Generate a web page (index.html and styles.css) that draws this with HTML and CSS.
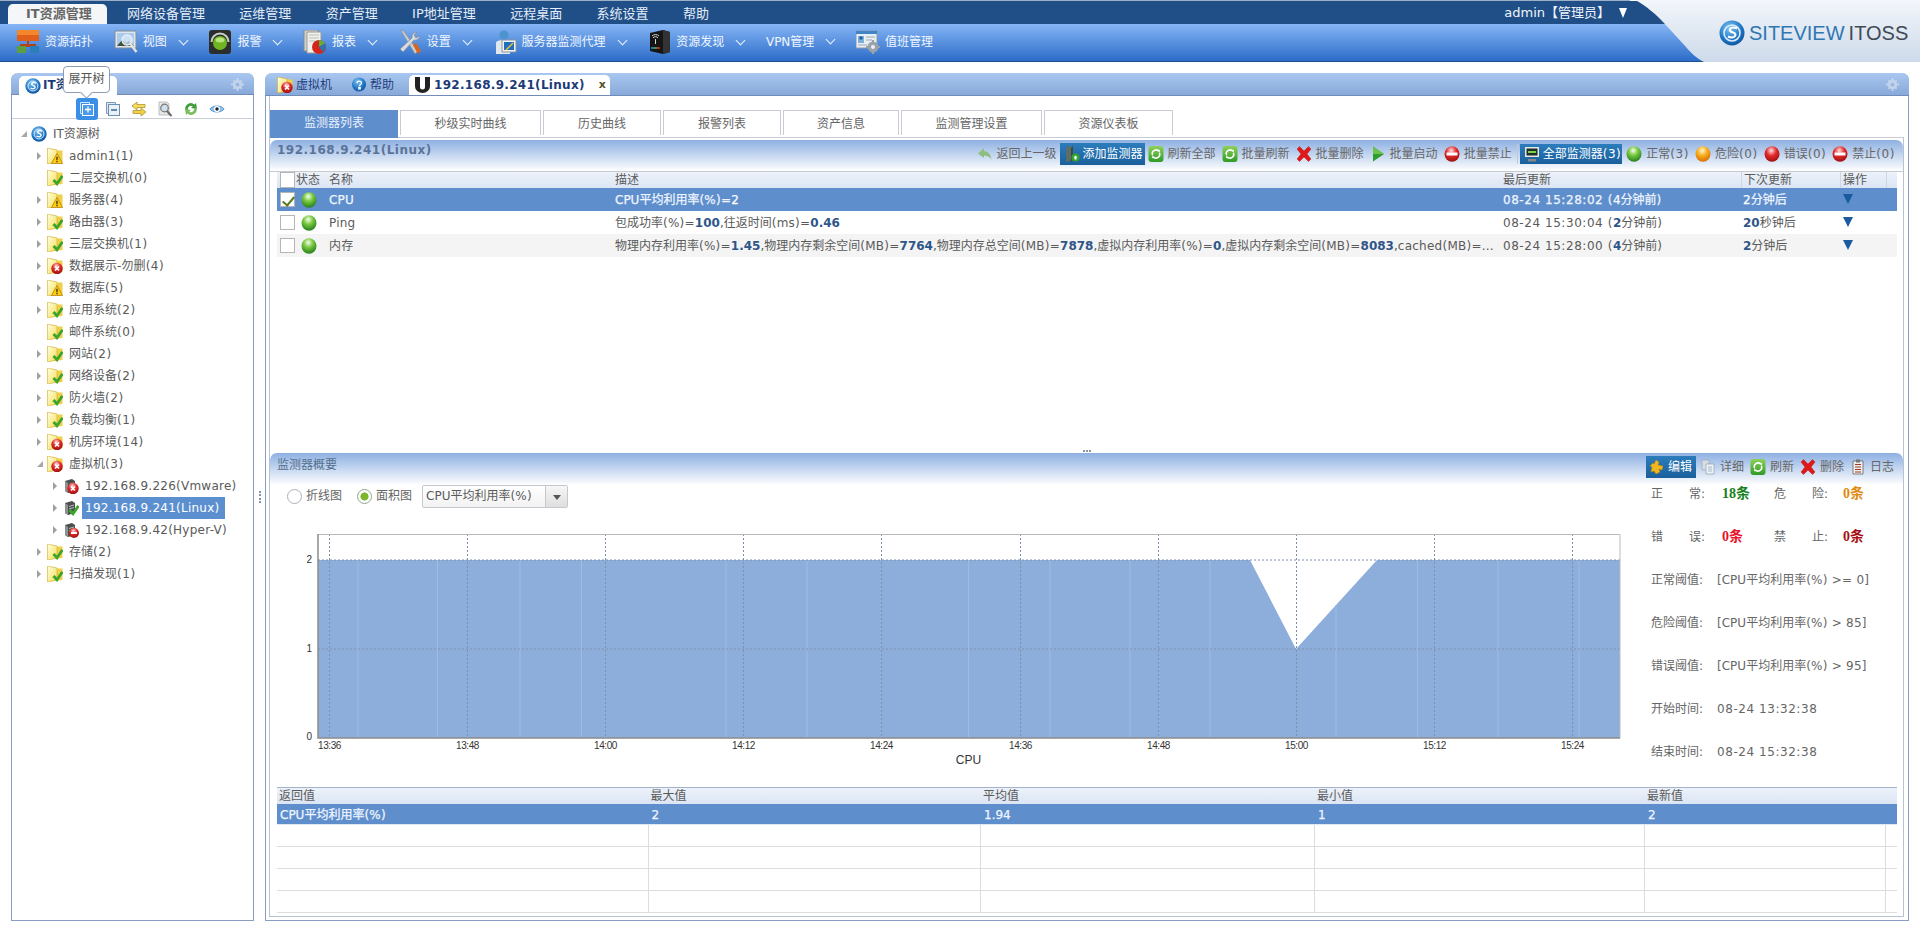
FILE: index.html
```html
<!DOCTYPE html>
<html lang="zh-CN">
<head>
<meta charset="utf-8">
<title>IT资源管理</title>
<link rel="stylesheet" href="styles.css">
</head>
<body>
<svg class="defs" xmlns="http://www.w3.org/2000/svg">
<defs>
<radialGradient id="gG" cx=".45" cy=".28" r=".75"><stop offset="0" stop-color="#f4ffe8"/><stop offset=".42" stop-color="#78c83f"/><stop offset="1" stop-color="#1f7a1a"/></radialGradient>
<radialGradient id="gO" cx=".45" cy=".28" r=".75"><stop offset="0" stop-color="#fff6cc"/><stop offset=".45" stop-color="#f7ad1e"/><stop offset="1" stop-color="#d56a00"/></radialGradient>
<radialGradient id="gR" cx=".45" cy=".28" r=".75"><stop offset="0" stop-color="#ffdede"/><stop offset=".45" stop-color="#e22b2b"/><stop offset="1" stop-color="#990d0d"/></radialGradient>
<linearGradient id="gF" x1="0" y1="0" x2="1" y2="1"><stop offset="0" stop-color="#fffee4"/><stop offset="1" stop-color="#f6de52"/></linearGradient>
<linearGradient id="gRf" x1="0" y1="0" x2="0" y2="1"><stop offset="0" stop-color="#8ed25a"/><stop offset="1" stop-color="#2f9a26"/></linearGradient>
<linearGradient id="gTb" x1="0" y1="0" x2="0" y2="1"><stop offset="0" stop-color="#85b5f5"/><stop offset="1" stop-color="#2c6cc8"/></linearGradient>
<linearGradient id="gLogo" x1="0" y1="0" x2="0" y2="1"><stop offset="0" stop-color="#f3f6fb"/><stop offset="1" stop-color="#cddaea"/></linearGradient>
<radialGradient id="gS" cx=".4" cy=".3" r=".8"><stop offset="0" stop-color="#7fc4f2"/><stop offset=".6" stop-color="#1f74c4"/><stop offset="1" stop-color="#0d4d94"/></radialGradient>
<g id="folder"><path d="M.5 1h7l1.500 1.500h6.500V14L2 15.500z" fill="#efd048"/><path d="M.5 0 10 2v12L.5 16z" fill="url(#gF)" stroke="#d0ae30" stroke-width=".6"/></g>
<g id="ovOk"><path d="M6.500 10l3.500 3.800 5.500-8" fill="none" stroke="#3da52b" stroke-width="2.800"/></g>
<g id="ovWarn"><path d="M10 5.500l5.700 10H4.300z" fill="#ffca10" stroke="#a87a00" stroke-width=".7"/><path d="M9.400 8.800h1.200v3.500H9.400zM9.400 13h1.200v1.200H9.400z" fill="#222"/></g>
<g id="ovErr"><circle cx="10" cy="10.500" r="5.700" fill="url(#gR)"/><path d="M8 8.500l4 4m0-4l-4 4" stroke="#fff" stroke-width="1.700"/></g>
<g id="ovStop"><circle cx="11" cy="11" r="5" fill="url(#gR)"/><path d="M8 10h6v2H8z" fill="#fff"/></g>
<g id="srv"><path d="M2 3l7-2 3 2v10l-7 2-3-2z" fill="#4b4f4f"/><path d="M2 3l3 2v10l-3-2z" fill="#8d9291"/><path d="M6 6.500l5-1.500M6 9l5-1.500" stroke="#b9bcbb"/></g>
<symbol id="f-ok" viewBox="0 0 16 16"><use href="#folder"/><use href="#ovOk"/></symbol>
<symbol id="f-warn" viewBox="0 0 16 16"><use href="#folder"/><use href="#ovWarn"/></symbol>
<symbol id="f-err" viewBox="0 0 16 16"><use href="#folder"/><use href="#ovErr"/></symbol>
<symbol id="s-ok" viewBox="0 0 16 16"><use href="#srv"/><use href="#ovOk"/></symbol>
<symbol id="s-err" viewBox="0 0 16 16"><use href="#srv"/><use href="#ovErr"/></symbol>
<symbol id="s-stop" viewBox="0 0 16 16"><use href="#srv"/><use href="#ovStop"/></symbol>
<symbol id="ball-g" viewBox="0 0 16 16"><ellipse cx="8" cy="8" rx="7.500" ry="7.800" fill="url(#gG)"/></symbol>
<symbol id="ball-o" viewBox="0 0 16 16"><ellipse cx="8" cy="8" rx="7.500" ry="7.800" fill="url(#gO)"/></symbol>
<symbol id="ball-r" viewBox="0 0 16 16"><ellipse cx="8" cy="8" rx="7.500" ry="7.800" fill="url(#gR)"/></symbol>
<symbol id="stop" viewBox="0 0 16 16"><ellipse cx="8" cy="8" rx="7.500" ry="7.800" fill="url(#gR)"/><path d="M2.500 6.500h11v3h-11z" fill="#fff"/></symbol>
<symbol id="refresh" viewBox="0 0 16 16"><rect x="0.500" y="0" width="15" height="16" rx="3" fill="url(#gRf)"/><path d="M4.500 9a3.700 3.700 0 0 1 6-4M11.500 7a3.700 3.700 0 0 1-6 4" fill="none" stroke="#fff" stroke-width="1.500"/><path d="M9 3.500l3 .5-.5 3zM7 12.500l-3-.5.500-3z" fill="#fff"/></symbol>
<symbol id="xred" viewBox="0 0 16 16"><path d="M1 3l2.500-2.500L8 5l4.500-4.500L15 3l-4 5 4 5-2.500 2.500L8 11l-4.500 4.500L1 13l4-5z" fill="#e01818" stroke="#a81010" stroke-width=".4"/></symbol>
<symbol id="play" viewBox="0 0 16 16"><path d="M3 0.500L14 8 3 15.500z" fill="#2f9d2b"/><path d="M3 0.500L14 8H3z" fill="#6cc24d"/></symbol>
<symbol id="back" viewBox="0 0 16 16"><path d="M7 2L1 7.500 7 12V9.500c3 0 5.500 1 7.500 4C14 8.500 11 5.500 7 5z" fill="#8fbf80"/></symbol>
<symbol id="add" viewBox="0 0 16 16"><path d="M2 1l7-1v14l-7 2z" fill="#5d6e66"/><path d="M9 0v14l-2 2V2z" fill="#3a4a44"/><circle cx="11.500" cy="11.500" r="4" fill="#2fa52c"/><path d="M11.500 9.500l2 2h-1v2h-2v-2h-1z" fill="#fff"/></symbol>
<symbol id="mon" viewBox="0 0 16 16"><rect x="1" y="1" width="14" height="10" fill="#e8e8e0"/><rect x="2.500" y="2.500" width="11" height="7" fill="#1d2f2a"/><path d="M4 5h8v2H4z" fill="#7ed048"/><path d="M4 13h8v2.500H4z" fill="#888"/></symbol>
<symbol id="edit" viewBox="0 0 16 16"><path d="M7 1l3 2-1 3 5 1-1 4-3-1 1 3-4 2-2-3-3 1 1-5-2-1 3-3 1 1z" fill="#f0b61e" stroke="#b98200" stroke-width=".5"/></symbol>
<symbol id="detail" viewBox="0 0 16 16"><path d="M2 1h7v10H2z" fill="#d6dde4" stroke="#9aa6b2" stroke-width=".7"/><path d="M6 5h8v10H6z" fill="#eef2f6" stroke="#8ea0b4" stroke-width=".7"/><path d="M8 8h4M8 10h4M8 12h4" stroke="#a8b8c8"/></symbol>
<symbol id="log" viewBox="0 0 16 16"><path d="M3 2h10v13H3z" fill="#eee" stroke="#666" stroke-width=".8"/><path d="M5 5.500h6M5 8h6M5 10.500h6M5 13h6" stroke="#a13a20"/><path d="M6 0.500h4v3H6z" fill="#777"/></symbol>
<symbol id="sv" viewBox="0 0 26 26"><circle cx="13" cy="13" r="12.500" fill="url(#gS)"/><circle cx="13" cy="13" r="8" fill="none" stroke="#d7ecff" stroke-width="1.600"/><path d="M18 8.500c-3-1.500-6-1-7 .5s1 3 3 3.500 3 2 2 3.500-4 2-7 .5" fill="none" stroke="#fff" stroke-width="2.200"/></symbol>
<symbol id="uicon" viewBox="0 0 15 16"><path d="M0 0h5v10a2.500 2.500 0 0 0 5 0V0h5v9.500a7.500 6.500 0 0 1-15 0z" fill="#222"/></symbol>
<symbol id="expand" viewBox="0 0 16 16"><path d="M1.500 1.500h9v2h-7v9h-2z" fill="none" stroke="#d6e6f6"/><rect x="3.500" y="3.500" width="11" height="11" fill="#4c9bea" stroke="#fff"/><path d="M9 5.500v6M6 8.500h6" stroke="#fff" stroke-width="1.300"/></symbol>
<symbol id="collapse" viewBox="0 0 16 16"><path d="M1.500 1.500h9v2h-7v9h-2z" fill="#dde7f2" stroke="#7d9abb"/><rect x="3.500" y="3.500" width="11" height="11" fill="#e9f1f8" stroke="#6d8eb3"/><path d="M6 9h6" stroke="#2b5a8c" stroke-width="1.400"/></symbol>
<symbol id="swap" viewBox="0 0 16 16"><path d="M1 5l5-4v2.500h8v3H6V9z" fill="#f6dc5a" stroke="#a68a20" stroke-width=".7"/><path d="M15 11l-5 4v-2.500H2v-3h8V7z" fill="#f3d048" stroke="#a68a20" stroke-width=".7"/></symbol>
<symbol id="find" viewBox="0 0 16 16"><path d="M2 1h8l2 2v11H2z" fill="#e8e8e8" stroke="#a9a9a9" stroke-width=".7"/><circle cx="7.500" cy="7" r="3.800" fill="#cfe0ea" stroke="#777" stroke-width="1.200"/><path d="M10 10l4.500 5" stroke="#666" stroke-width="2"/></symbol>
<symbol id="sync" viewBox="0 0 16 16"><path d="M2.500 9a5.500 5.500 0 0 1 9-5.500L13 2l1 6-6-1 1.800-1.700A3.200 3.200 0 0 0 5 9z" fill="#3f9e3a"/><path d="M13.500 7a5.500 5.500 0 0 1-9 5.500L3 14l-1-6 6 1-1.800 1.700A3.200 3.200 0 0 0 11 7z" fill="#7bbd62"/></symbol>
<symbol id="eye" viewBox="0 0 18 16"><path d="M1 8c3-4.500 13-4.500 16 0-3 4.500-13 4.500-16 0z" fill="#8fc2ea" stroke="#4d8fc7"/><circle cx="9" cy="8" r="3.400" fill="#fff"/><circle cx="9" cy="8" r="1.900" fill="#123"/></symbol>
<symbol id="gear" viewBox="0 0 16 16"><path d="M8 3a5 5 0 1 0 0 10A5 5 0 0 0 8 3zm0 3a2 2 0 1 1 0 4 2 2 0 0 1 0-4z" fill="#c3d3ea"/><path d="M7 1h2v2.500H7zM7 12.500h2V15H7zM1 7h2.500v2H1zM12.500 7H15v2h-2.500zM2.800 4.200l1.400-1.400 1.800 1.800-1.400 1.400zM10 11.400l1.400-1.400 1.800 1.800-1.400 1.400zM2.800 11.800l1.800-1.800 1.400 1.400-1.800 1.800zM10 4.600l1.800-1.800 1.400 1.400-1.800 1.800z" fill="#c3d3ea"/></symbol>
<symbol id="help" viewBox="0 0 16 16"><ellipse cx="8" cy="7.500" rx="7" ry="7" fill="url(#gS)"/><path d="M5 15l3-3h3z" fill="#1f74c4"/><path d="M6 6c0-2.500 4.500-2.500 4.500 0 0 1.500-2 1.500-2 3M7.800 10.500h1.400v1.400H7.800z" fill="none" stroke="#fff" stroke-width="1.300"/></symbol>
<symbol id="t-topo" viewBox="0 0 24 24"><path d="M1 0h22v11H1z" fill="#e0601a"/><path d="M1 0h22v5H1z" fill="#f4862c"/><path d="M11 11h2v3h7v3H4v-3h7z" fill="#b2421a"/><path d="M1 16h9v7H1z" fill="#5c9f3c"/><path d="M14 16h9v7h-9z" fill="#2b7fb8"/></symbol>
<symbol id="t-view" viewBox="0 0 24 24"><path d="M1 1h21v17H1z" fill="#dfe6ee" stroke="#7f8b96"/><path d="M3 3h17v13H3z" fill="#a9cbec"/><path d="M3 16l5-6 4 3 3-2 5 5z" fill="#40503c"/><circle cx="13" cy="10" r="5" fill="#dbe9f6" fill-opacity=".7" stroke="#eef" stroke-width="1.300"/><path d="M16.500 14l6 8" stroke="#e8e4dc" stroke-width="2.400"/></symbol>
<symbol id="t-alarm" viewBox="0 0 24 24"><rect x="1" y="0" width="22" height="24" rx="3" fill="#2b2e2c"/><path d="M3.500 12a8.500 8.500 0 0 1 17 0" fill="none" stroke="#c9cfc9" stroke-width="2"/><circle cx="12" cy="13" r="7" fill="#6fb523"/><ellipse cx="12" cy="10" rx="4.500" ry="2.500" fill="#b8e37a"/></symbol>
<symbol id="t-report" viewBox="0 0 24 24"><path d="M1 0h14v21H1z" fill="#d0d2d0" stroke="#888"/><path d="M4 2h14v21H4z" fill="#f1f1ec" stroke="#999"/><path d="M6 5h10M6 8h10M6 11h6" stroke="#bbb"/><circle cx="16" cy="17" r="7" fill="#d4271b"/><path d="M16 17V10a7 7 0 0 1 6 3.500z" fill="#63ad3a"/><path d="M16 17l6-3.500a7 7 0 0 1-2 8.500z" fill="#2b73b5"/></symbol>
<symbol id="t-set" viewBox="0 0 24 24"><path d="M3 1l2-1 15 21-3 3z" fill="#c8cdd0" stroke="#7a7f82" stroke-width=".6"/><path d="M22 6a5 5 0 0 1-6 4L5 22l-3-3L14 8a5 5 0 0 1 5-6l-3 3 2 3z" fill="#d9dcde" stroke="#7e8388" stroke-width=".6"/><path d="M15 15l3-2 5 8-3 3z" fill="#d9641f"/></symbol>
<symbol id="t-agent" viewBox="0 0 24 24"><circle cx="11" cy="5" r="4.500" fill="#4d93cf"/><path d="M3 24V13c0-2 3-3 8-3s6 1 6 3v11z" fill="#dfe7ef"/><path d="M9 10h14v12H9z" fill="#f0f4f6" stroke="#8a949a"/><path d="M11 12h10v8H11z" fill="#1f6ec0"/><path d="M13 20l7-7" stroke="#f4c430" stroke-width="1.500"/></symbol>
<symbol id="t-disc" viewBox="0 0 24 24"><path d="M3 3l13-3 7 2v20l-7 2-13-3z" fill="#151515"/><path d="M16 0l7 2v20l-7 2z" fill="#333"/><path d="M6 8a3 3 0 0 1 5 0M5 6a5 5 0 0 1 7 0" fill="none" stroke="#d8d8d8"/><path d="M8.500 9v5" stroke="#d8d8d8"/><path d="M4 18h3" stroke="#2a8ee0" stroke-width="1.600"/><path d="M7 18h3" stroke="#4cb84a" stroke-width="1.600"/><path d="M10 18h3" stroke="#d8382a" stroke-width="1.600"/></symbol>
<symbol id="t-duty" viewBox="0 0 24 24"><path d="M0 1h21v17H0z" fill="#e8eef3" stroke="#8b9aa8"/><path d="M0 1h21v3H0z" fill="#3f84c4"/><path d="M2 6h6v7H2z" fill="#7db0dc"/><circle cx="5" cy="8" r="1.700" fill="#1f5e9c"/><path d="M10 7h9M10 10h6M2 15h9" stroke="#9aa9b6" stroke-width="1.200"/><circle cx="17" cy="17" r="5.500" fill="#9aa3aa"/><circle cx="17" cy="17" r="2" fill="#eef"/><path d="M16 10h2v3h-2zM16 21h2v3h-2zM10 16h3v2h-3zM21 16h3v2h-3z" fill="#9aa3aa"/></symbol>
</defs>
</svg>

<header class="hd">
  <div class="hd-left">
    <nav class="nav">
      <a class="nav-i on">IT资源管理</a>
      <a class="nav-i">网络设备管理</a>
      <a class="nav-i">运维管理</a>
      <a class="nav-i">资产管理</a>
      <a class="nav-i">IP地址管理</a>
      <a class="nav-i">远程桌面</a>
      <a class="nav-i">系统设置</a>
      <a class="nav-i">帮助</a>
      <div class="user"><span>admin【管理员】</span><i class="tri"></i></div>
    </nav>
    <div class="bar">
      <a class="bi"><svg class="i24"><use href="#t-topo"/></svg><span>资源拓扑</span></a>
      <a class="bi"><svg class="i24"><use href="#t-view"/></svg><span>视图</span><i class="chev"></i></a>
      <a class="bi"><svg class="i24"><use href="#t-alarm"/></svg><span>报警</span><i class="chev"></i></a>
      <a class="bi"><svg class="i24"><use href="#t-report"/></svg><span>报表</span><i class="chev"></i></a>
      <a class="bi"><svg class="i24"><use href="#t-set"/></svg><span>设置</span><i class="chev"></i></a>
      <a class="bi"><svg class="i24"><use href="#t-agent"/></svg><span>服务器监测代理</span><i class="chev"></i></a>
      <a class="bi"><svg class="i24"><use href="#t-disc"/></svg><span>资源发现</span><i class="chev"></i></a>
      <a class="bi"><span>VPN管理</span><i class="chev"></i></a>
      <a class="bi"><svg class="i24"><use href="#t-duty"/></svg><span>值班管理</span></a>
    </div>
  </div>
  <div class="hd-right">
    <svg class="hd-bg" viewBox="0 0 290 62" preserveAspectRatio="none">
      <rect y="1" width="290" height="23" fill="#204f87"/>
      <rect y="24" width="290" height="37" fill="url(#gTb)"/>
      <rect y="61" width="290" height="1" fill="#1f4f8e"/>
      <path d="M5 0C15 5 27 15 34 23L56 47C61 53 66 58 74 62H290V0z" fill="url(#gLogo)"/>
    </svg>
    <div class="logo"><svg class="logo-i"><use href="#sv"/></svg><span class="logo-a">SITEVIEW</span><span class="logo-b">ITOSS</span></div>
  </div>
</header>

<main class="main">
  <aside class="lp">
    <div class="lp-head">
      <div class="lp-tab"><svg class="i"><use href="#sv"/></svg><b>IT资源树</b></div>
      <svg class="gear"><use href="#gear"/></svg>
      <div class="tip">展开树</div>
    </div>
    <div class="lp-tools">
      <a class="tbtn on"><svg class="i"><use href="#expand"/></svg></a>
      <a class="tbtn"><svg class="i"><use href="#collapse"/></svg></a>
      <a class="tbtn"><svg class="i"><use href="#swap"/></svg></a>
      <a class="tbtn"><svg class="i"><use href="#find"/></svg></a>
      <a class="tbtn"><svg class="i"><use href="#sync"/></svg></a>
      <a class="tbtn"><svg class="i"><use href="#eye"/></svg></a>
    </div>
    <ul class="tree">
      <li class="lv0"><i class="ar op"></i><svg class="i"><use href="#sv"/></svg><span class="tx">IT资源树</span></li>
      <li class="lv1"><i class="ar"></i><svg class="i"><use href="#f-warn"/></svg><span class="tx"><span class="l">admin1(1)</span></span></li>
      <li class="lv1"><i class="ar no"></i><svg class="i"><use href="#f-ok"/></svg><span class="tx">二层交换机<span class="t">(0)</span></span></li>
      <li class="lv1"><i class="ar"></i><svg class="i"><use href="#f-warn"/></svg><span class="tx">服务器<span class="t">(4)</span></span></li>
      <li class="lv1"><i class="ar"></i><svg class="i"><use href="#f-ok"/></svg><span class="tx">路由器<span class="t">(3)</span></span></li>
      <li class="lv1"><i class="ar"></i><svg class="i"><use href="#f-ok"/></svg><span class="tx">三层交换机<span class="t">(1)</span></span></li>
      <li class="lv1"><i class="ar"></i><svg class="i"><use href="#f-err"/></svg><span class="tx">数据展示<span class="l">-</span>勿删<span class="t">(4)</span></span></li>
      <li class="lv1"><i class="ar"></i><svg class="i"><use href="#f-warn"/></svg><span class="tx">数据库<span class="t">(5)</span></span></li>
      <li class="lv1"><i class="ar"></i><svg class="i"><use href="#f-ok"/></svg><span class="tx">应用系统<span class="t">(2)</span></span></li>
      <li class="lv1"><i class="ar no"></i><svg class="i"><use href="#f-ok"/></svg><span class="tx">邮件系统<span class="t">(0)</span></span></li>
      <li class="lv1"><i class="ar"></i><svg class="i"><use href="#f-ok"/></svg><span class="tx">网站<span class="t">(2)</span></span></li>
      <li class="lv1"><i class="ar"></i><svg class="i"><use href="#f-ok"/></svg><span class="tx">网络设备<span class="t">(2)</span></span></li>
      <li class="lv1"><i class="ar"></i><svg class="i"><use href="#f-ok"/></svg><span class="tx">防火墙<span class="t">(2)</span></span></li>
      <li class="lv1"><i class="ar"></i><svg class="i"><use href="#f-ok"/></svg><span class="tx">负载均衡<span class="t">(1)</span></span></li>
      <li class="lv1"><i class="ar"></i><svg class="i"><use href="#f-err"/></svg><span class="tx">机房环境<span class="t">(14)</span></span></li>
      <li class="lv1"><i class="ar op"></i><svg class="i"><use href="#f-err"/></svg><span class="tx">虚拟机<span class="t">(3)</span></span></li>
      <li class="lv2"><i class="ar"></i><svg class="i"><use href="#s-err"/></svg><span class="tx"><span class="l">192.168.9.226(Vmware)</span></span></li>
      <li class="lv2"><i class="ar"></i><svg class="i"><use href="#s-ok"/></svg><span class="tx sel"><span class="l">192.168.9.241(Linux)</span></span></li>
      <li class="lv2"><i class="ar"></i><svg class="i"><use href="#s-stop"/></svg><span class="tx"><span class="l">192.168.9.42(Hyper-V)</span></span></li>
      <li class="lv1"><i class="ar"></i><svg class="i"><use href="#f-ok"/></svg><span class="tx">存储<span class="t">(2)</span></span></li>
      <li class="lv1"><i class="ar"></i><svg class="i"><use href="#f-ok"/></svg><span class="tx">扫描发现<span class="t">(1)</span></span></li>
    </ul>
  </aside>

  <div class="vsplit"><i></i></div>

  <section class="rp">
    <div class="rp-head">
      <a class="mt"><svg class="i"><use href="#f-err"/></svg>虚拟机</a>
      <a class="mt"><svg class="i"><use href="#help"/></svg>帮助</a>
      <a class="mt on"><svg class="u"><use href="#uicon"/></svg><b class="mt-name">192.168.9.241(Linux)</b><i class="close">x</i></a>
      <svg class="gear"><use href="#gear"/></svg>
    </div>
    <div class="frame">
      <div class="subtabs">
        <a class="st on w128">监测器列表</a>
        <a class="st w141">秒级实时曲线</a>
        <a class="st w118">历史曲线</a>
        <a class="st w118">报警列表</a>
        <a class="st w116">资产信息</a>
        <a class="st w141">监测管理设置</a>
        <a class="st w129">资源仪表板</a>
      </div>
      <div class="fbody">
        <div class="p1">
          <div class="phead">
            <b class="ptitle">192.168.9.241(Linux)</b>
            <div class="tb">
              <a class="ti"><svg class="i"><use href="#back"/></svg>返回上一级</a>
              <a class="ti hl hl-add"><svg class="i"><use href="#add"/></svg>添加监测器</a>
              <a class="ti"><svg class="i"><use href="#refresh"/></svg>刷新全部</a>
              <a class="ti"><svg class="i"><use href="#refresh"/></svg>批量刷新</a>
              <a class="ti"><svg class="i"><use href="#xred"/></svg>批量删除</a>
              <a class="ti"><svg class="i"><use href="#play"/></svg>批量启动</a>
              <a class="ti"><svg class="i"><use href="#stop"/></svg>批量禁止</a>
              <i class="tsep"></i>
              <a class="ti hl hl-all"><svg class="i"><use href="#mon"/></svg><span>全部监测器<span class="t">(3)</span></span></a>
              <a class="ti"><svg class="i"><use href="#ball-g"/></svg><span>正常<span class="t">(3)</span></span></a>
              <a class="ti"><svg class="i"><use href="#ball-o"/></svg><span>危险<span class="t">(0)</span></span></a>
              <a class="ti"><svg class="i"><use href="#ball-r"/></svg><span>错误<span class="t">(0)</span></span></a>
              <a class="ti"><svg class="i"><use href="#stop"/></svg><span>禁止<span class="t">(0)</span></span></a>
            </div>
          </div>
          <div class="gr gh">
            <div class="c"><i class="cb"></i></div><div class="c">状态</div><div class="c">名称</div><div class="c">描述</div><div class="c">最后更新</div><div class="c sp">下次更新</div><div class="c sp">操作</div><div class="c sp"></div>
          </div>
          <div class="gr row sel-row">
            <div class="c"><i class="cb ck"></i></div><div class="c"><svg class="i"><use href="#ball-g"/></svg></div><div class="c"><span class="nm">CPU</span></div>
            <div class="c d">CPU平均利用率<span class="l">(%)=</span><b>2</b></div>
            <div class="c"><span class="t">08-24 15:28:02 (</span><b>4</b>分钟前<span class="l">)</span></div>
            <div class="c sn"><b>2</b>分钟后</div><div class="c sn"><i class="dn"></i></div><div class="c"></div>
          </div>
          <div class="gr row">
            <div class="c"><i class="cb"></i></div><div class="c"><svg class="i"><use href="#ball-g"/></svg></div><div class="c"><span class="nm">Ping</span></div>
            <div class="c d">包成功率<span class="l">(%)=</span><b>100</b>,往返时间<span class="l">(ms)=</span><b>0.46</b></div>
            <div class="c"><span class="t">08-24 15:30:04 (</span><b>2</b>分钟前<span class="l">)</span></div>
            <div class="c sn"><b>20</b>秒钟后</div><div class="c sn"><i class="dn"></i></div><div class="c"></div>
          </div>
          <div class="gr row alt">
            <div class="c"><i class="cb"></i></div><div class="c"><svg class="i"><use href="#ball-g"/></svg></div><div class="c"><span class="nm">内存</span></div>
            <div class="c d">物理内存利用率<span class="l">(%)=</span><b>1.45</b>,物理内存剩余空间<span class="l">(MB)=</span><b>7764</b>,物理内存总空间<span class="l">(MB)=</span><b>7878</b>,虚拟内存利用率<span class="l">(%)=</span><b>0</b>,虚拟内存剩余空间<span class="l">(MB)=</span><b>8083</b>,<span class="l">cached(MB)=...</span></div>
            <div class="c"><span class="t">08-24 15:28:00 (</span><b>4</b>分钟前<span class="l">)</span></div>
            <div class="c sn"><b>2</b>分钟后</div><div class="c sn"><i class="dn"></i></div><div class="c"></div>
          </div>
        </div>
        <div class="hsplit"><i></i></div>
        <div class="p2">
          <div class="phead ph2">
            <span class="ptitle2">监测器概要</span>
            <div class="tb tb2">
              <a class="ti hl hl-ed"><svg class="i"><use href="#edit"/></svg>编辑</a>
              <a class="ti"><svg class="i"><use href="#detail"/></svg>详细</a>
              <a class="ti"><svg class="i"><use href="#refresh"/></svg>刷新</a>
              <a class="ti"><svg class="i"><use href="#xred"/></svg>删除</a>
              <a class="ti"><svg class="i"><use href="#log"/></svg>日志</a>
            </div>
          </div>
          <div class="p2-top">
            <div class="chart-col">
              <div class="ctl">
                <label class="rd"><i class="radio"></i>折线图</label>
                <label class="rd"><i class="radio on"></i>面积图</label>
                <div class="sel-box"><span>CPU平均利用率<span class="l">(%)</span></span><i class="sel-ar"></i></div>
              </div>
              <svg class="chart" viewBox="0 0 1370 270" width="1370" height="270">
                <polygon points="48,50 980,50 1026,139 1107,50 1350,50 1350,228 48,228" fill="#8daedb"/>
                <g stroke="#9fbbe2" stroke-width="1">
                  <path d="M88 50V228M167.500 50V228M250 50V228M311.500 50V228M456 50V228M537 50V228M698.500 50V228M780 50V228M860 50V228M940 50V228M1066 95V228M1147.500 50V228M1228 50V228M1309 50V228"/>
                </g>
                <g stroke="#7f90ac" stroke-width="1" stroke-dasharray="2 2">
                  <path d="M48 50H1350M48 139H1350"/>
                  <path d="M59.500 24V228M197.500 24V228M335.500 24V228M473.500 24V228M611.500 24V228M750.500 24V228M888.500 24V228M1026.500 24V228M1164.500 24V228M1302.500 24V228"/>
                </g>
                <path d="M48 24.500H1350V228" fill="none" stroke="#bbb"/>
                <path d="M48 24V228H1350" fill="none" stroke="#8c8c8c" stroke-width="1.500"/>
                <g class="ct" text-anchor="middle">
                  <text x="39" y="53">2</text><text x="39" y="142">1</text><text x="39" y="230">0</text>
                  <text x="59.500" y="239">13:36</text><text x="197.500" y="239">13:48</text><text x="335.500" y="239">14:00</text><text x="473.500" y="239">14:12</text><text x="611.500" y="239">14:24</text><text x="750.500" y="239">14:36</text><text x="888.500" y="239">14:48</text><text x="1026.500" y="239">15:00</text><text x="1164.500" y="239">15:12</text><text x="1302.500" y="239">15:24</text>
                  <text class="ct-x" x="698.500" y="254">CPU</text>
                </g>
              </svg>
            </div>
            <div class="info">
              <div class="ir two"><span class="jl"><i>正</i><i>常:</i></span><b class="ok">18条</b><span class="jl"><i>危</i><i>险:</i></span><b class="warn">0条</b></div>
              <div class="ir two"><span class="jl"><i>错</i><i>误:</i></span><b class="err">0条</b><span class="jl"><i>禁</i><i>止:</i></span><b class="ban">0条</b></div>
              <div class="ir"><span>正常阈值:</span><span class="l2">[CPU平均利用率<span class="l">(%) &gt;= 0]</span></span></div>
              <div class="ir"><span>危险阈值:</span><span class="l2">[CPU平均利用率<span class="l">(%) &gt; 85]</span></span></div>
              <div class="ir"><span>错误阈值:</span><span class="l2">[CPU平均利用率<span class="l">(%) &gt; 95]</span></span></div>
              <div class="ir"><span>开始时间:</span><span class="l2"><span class="t">08-24 13:32:38</span></span></div>
              <div class="ir"><span>结束时间:</span><span class="l2"><span class="t">08-24 15:32:38</span></span></div>
            </div>
          </div>
          <div class="vt">
            <div class="vr vh"><div>返回值</div><div>最大值</div><div>平均值</div><div>最小值</div><div>最新值</div><div></div></div>
            <div class="vr va"><div>CPU平均利用率<span class="l">(%)</span></div><div>2</div><div>1.94</div><div>1</div><div>2</div><div></div></div>
            <div class="vr ve"><div></div><div></div><div></div><div></div><div></div><div></div></div>
            <div class="vr ve"><div></div><div></div><div></div><div></div><div></div><div></div></div>
            <div class="vr ve"><div></div><div></div><div></div><div></div><div></div><div></div></div>
            <div class="vr ve"><div></div><div></div><div></div><div></div><div></div><div></div></div>
          </div>
        </div>
      </div>
    </div>
  </section>
</main>
</body>
</html>
```

FILE: styles.css
```css
* { box-sizing: border-box; }
html, body { margin: 0; height: 928px; overflow: hidden; background: #fff; }
body { font: 12px/1.2 "DejaVu Sans", "Noto Sans CJK SC", sans-serif; color: #5a5a5a; }
i { font-style: normal; }
a { display: block; }
.defs { position: absolute; width: 0; height: 0; }
.i { width: 16px; height: 16px; flex: none; display: block; }
.i24 { width: 24px; height: 24px; flex: none; display: block; }
.l { letter-spacing: .25px; }
.t { letter-spacing: .55px; }

/* header */
.hd { display: flex; height: 62px; }
.hd-left { flex: 1; min-width: 0; display: flex; flex-direction: column; padding-top: 1px; background: #9db0c8; }
.nav { height: 23px; background: #204f87; display: flex; padding-left: 8px; font-size: 13px; color: #e4edf9; }
.nav-i { padding: 3px 17.200px 0; line-height: 20px; }
.nav-i.on { margin-top: 3px; padding: 0 15px 0 18px; margin-right: 3px; background: #f4f6f8; color: #666; font-weight: 700; border-radius: 5px 5px 0 0; height: 20px; }
.user { margin-left: auto; padding: 3px 3px 0 0; display: flex; align-items: center; gap: 9px; height: 20px; color: #f0f5fb; }
.tri { width: 0; height: 0; border: 4.500px solid transparent; border-top: 10px solid #fff; border-bottom: 0; }
.bar { flex: 1; display: flex; align-items: center; padding: 0 0 1px 16px; background: linear-gradient(#85b5f5, #2c6cc8); border-bottom: 1px solid #1f4f8e; color: #f0f6ff; }
.bi { display: flex; align-items: center; gap: 5px; margin-right: 20.700px; }
.chev { width: 7px; height: 7px; margin: -4px 1px 0 8px; border-right: 1.500px solid #eaf2ff; border-bottom: 1.500px solid #eaf2ff; transform: rotate(45deg); }
.hd-right { width: 290px; position: relative; flex: none; }
.hd-bg { position: absolute; inset: 0; width: 100%; height: 100%; display: block; }
.logo { position: relative; height: 62px; display: flex; align-items: center; padding: 4px 0 0 89px; font: 20px "Liberation Sans", sans-serif; white-space: pre; }
.logo-i { width: 26px; height: 26px; margin-right: 4px; flex: none; }
.logo-a { color: #2f77b2; margin-right: 4px; }
.logo-b { color: #3e4a56; }

/* layout */
.main { display: flex; align-items: flex-start; padding: 11px 11px 0; height: 866px; }
.vsplit { width: 11px; height: 848px; display: flex; align-items: center; justify-content: center; flex: none; }
.vsplit i { height: 12px; border-left: 2px dotted #8894a8; }

/* left */
.lp { width: 243px; height: 848px; flex: none; border: 1px solid #8a9cc4; border-top: 0; border-radius: 7px 7px 0 0; position: relative; }
.lp-head { height: 22px; margin: 0 -1px; background: linear-gradient(#a9c7f0, #88a9d9); border-bottom: 1px solid #6f8db8; border-radius: 7px 7px 0 0; position: relative; display: flex; justify-content: space-between; padding: 3px 9px 0 8px; }
.lp-tab { width: 98px; height: 19px; background: #fff; border-radius: 5px 5px 0 0; display: flex; align-items: center; gap: 2px; padding-left: 6px; color: #1c3a78; white-space: nowrap; overflow: hidden; }
.gear { width: 15px; height: 15px; margin-top: 1px; flex: none; }
.tip { position: absolute; left: 52px; top: -7px; width: 47px; height: 27px; background: #fff; border: 1px solid #8c9cb4; border-radius: 4px; text-align: center; line-height: 25px; color: #555; }
.tip::after { content: ""; position: absolute; left: 18px; bottom: -5px; width: 8px; height: 8px; background: #fff; border-right: 1px solid #8c9cb4; border-bottom: 1px solid #8c9cb4; transform: rotate(45deg); }
.lp-tools { height: 24px; border-bottom: 1px solid #c8cdd6; display: flex; gap: 4px; padding: 3px 0 0 64px; }
.tbtn { width: 22px; height: 21px; display: flex; align-items: center; justify-content: center; }
.tbtn.on { height: 22px; background: #3a8ee6; border-radius: 3px; position: relative; }
.tree { list-style: none; margin: 0; padding: 4px 0 0; }
.tree li { height: 22px; display: flex; align-items: center; }
.lv0 { padding-left: 7px; }
.lv1 { padding-left: 23px; }
.lv2 { padding-left: 39px; }
.ar { width: 12px; flex: none; height: 8px; position: relative; }
.ar::before { content: ""; position: absolute; left: 2px; top: 0; border: 4px solid transparent; border-left: 4px solid #a0a0a0; border-right: 0; }
.ar.op::before { top: 1px; border: 0; border-bottom: 6px solid #a8a8a8; border-left: 6px solid transparent; }
.ar.no::before { display: none; }
.tx { margin-left: 6px; white-space: nowrap; height: 22px; line-height: 22px; }
.tx.sel { margin-left: 3px; padding: 0 5px 0 3px; background: #5c8fcf; color: #fff; }

/* right */
.rp { flex: 1; height: 848px; min-width: 0; border: 1px solid #8a9cc4; border-top: 0; border-radius: 7px 7px 0 0; display: flex; flex-direction: column; }
.rp-head { height: 23px; margin: 0 -1px; flex: none; background: linear-gradient(#a9c7f0, #88a9d9); border-bottom: 1px solid #6f8db8; border-radius: 7px 7px 0 0; display: flex; align-items: flex-end; padding-left: 12px; gap: 3px; position: relative; }
.rp-head .gear { margin: 0 9px 3px auto; }
.mt { display: flex; align-items: center; gap: 3px; height: 20px; color: #1f3e7c; margin-right: 16px; }
.mt.on { margin: 0 0 0 -4px; width: 201px; padding-left: 6px; background: #fff; border-radius: 5px 5px 0 0; gap: 0; }
.u { width: 15px; height: 16px; margin-right: 4px; flex: none; }
.mt-name { letter-spacing: .3px; color: #1c3a78; }
.close { margin-left: 14px; color: #555028; font-weight: 700; font-size: 11px; }
.frame { flex: 1; min-height: 0; margin: 0 4px 3px 3px; border-left: 1px solid #b7c2d4; padding-top: 14px; display: flex; flex-direction: column; }
.subtabs { height: 28px; flex: none; display: flex; gap: 2px; border-bottom: 1px solid #c8ccd2; }
.st { height: 25px; border: 1px solid #c8ccd2; border-bottom: 0; text-align: center; line-height: 26px; color: #666; background: #fff; }
.st.on { height: 28px; background: #5f8ecc; border: 0; color: #e9f1fc; line-height: 27px; }
.w116 { width: 116px; } .w118 { width: 118px; } .w128 { width: 128px; } .w129 { width: 129px; } .w141 { width: 141px; }
.fbody { flex: 1; min-height: 0; border-right: 1px solid #b7c2d4; border-bottom: 1px solid #b7c2d4; padding-top: 2px; display: flex; flex-direction: column; }
.p1 { height: 308px; flex: none; }
.phead { height: 32px; display: flex; justify-content: space-between; padding: 0 8px 0 7px; background: linear-gradient(#8db0e2, #fff); border-radius: 7px 7px 0 0; border-bottom: 1px solid #c5c9d0; }
.ptitle { color: #5a7398; line-height: 20px; letter-spacing: .5px; }
.tb { display: flex; align-items: center; height: 22px; margin-top: 3px; gap: 6px; white-space: nowrap; }
.ti { display: flex; align-items: center; gap: 4px; color: #666; }
.hl { background: linear-gradient(#2c7cbc, #1b5f9c); color: #fff; height: 22px; }
.hl-add { padding: 0 2px 0 4px; margin: 0 -3px; gap: 3px; }
.hl-all { padding: 0 1px 0 4px; margin: 0 -2px 0 -4px; gap: 3px; height: 20px; }
.hl-ed { padding: 0 0 0 3px; gap: 3px; margin-right: -2px; width: 50px; }
.tsep { width: 1px; height: 20px; background: #c5c9d0; margin-left: -1px; }
.gr { display: grid; grid-template-columns: 19px 33px 286px 888px 238px 99px 46px 11px; margin: 0 6px 0 7px; }
.gh { height: 16px; background: linear-gradient(#edf2fa, #dbe5f4); line-height: 16px; color: #5a5a5a; }
.gh .sp { border-left: 1px solid #cfd6e2; padding-left: 2px; }
.gh > .c:nth-child(1) { padding-left: 3px; }
.row { height: 23px; align-items: start; line-height: 25px; }
.c { min-width: 0; white-space: nowrap; }
.row > .c:nth-child(1) { padding: 4px 0 0 3px; }
.row > .c:nth-child(2) { padding: 4px 0 0 5px; }
.nm { letter-spacing: .2px; }
.sn { padding-left: 2px; }
.row > .sn:nth-child(7) { padding-left: 3px; }
.d { overflow: hidden; padding-right: 6px; }
.row b { color: #2f5589; }
.alt { background: #f4f4f4; }
.sel-row { background: #5f8ecc; color: #eef5ff; -webkit-text-stroke: .25px #eef5ff; }
.sel-row b { color: #fff; font-weight: 400; }
.cb { display: block; width: 15px; height: 15px; background: #fff; border: 1px solid #b5b5b5; position: relative; }
.gh .cb { height: 16px; }
.ck::after { content: ""; position: absolute; left: 4px; top: 1px; width: 5px; height: 10px; border-right: 2px solid #5a7a1e; border-bottom: 2px solid #5a7a1e; transform: rotate(40deg); }
.dn { display: block; width: 0; height: 0; border: 5.500px solid transparent; border-top: 10px solid #1a5a9e; border-bottom: 0; margin-top: 6px; }
.hsplit { height: 5px; flex: none; display: flex; justify-content: center; align-items: center; }
.hsplit i { width: 8px; border-top: 2px dotted #8a94a8; }
.p2 { flex: 1; min-height: 0; display: flex; flex-direction: column; }
.ph2 { border-bottom: 0; background: linear-gradient(#8db0e2, #fff); padding-right: 9px; }
.ptitle2 { line-height: 24px; color: #55708f; }
.tb2 { gap: 6px; margin-top: 3px; }
.tb2 .ti .i { margin-top: -1px; }
.p2-top { height: 302px; flex: none; display: flex; }
.chart-col { width: 1370px; flex: none; }
.ctl { height: 23px; padding-left: 17px; display: flex; align-items: center; gap: 15px; }
.rd { display: flex; align-items: center; gap: 4px; color: #666; }
.radio { width: 15px; height: 15px; border: 1px solid #aab0b8; border-radius: 50%; background: #fff; display: block; flex: none; }
.radio.on { background: radial-gradient(circle, #7fb52a 0 3.800px, #fff 4.300px); border-color: #8ea88a; }
.sel-box { width: 146px; height: 23px; margin-left: -5px; border: 1px solid #c5c9cf; border-radius: 2px; display: flex; align-items: center; justify-content: space-between; padding-left: 3px; background: linear-gradient(#fff, #f2f2f2); white-space: nowrap; }
.sel-ar { width: 22px; height: 21px; border-left: 1px solid #c5c9cf; background: linear-gradient(#f6f6f6, #dedede); position: relative; flex: none; }
.sel-ar::after { content: ""; position: absolute; left: 7px; top: 9px; border: 4px solid transparent; border-top: 5px solid #555; border-bottom: 0; }
.chart { display: block; margin-top: 2px; }
.ct text { font: 10px "Liberation Sans", sans-serif; fill: #333; letter-spacing: -.4px; }
.ct .ct-x { font-size: 12px; letter-spacing: 0; }
.info { flex: 1; min-width: 0; padding: 1px 0 0 11px; }
.ir { height: 43px; line-height: 16px; display: flex; white-space: nowrap; color: #666; }
.l2 { margin-left: 14px; }
.two { display: grid; grid-template-columns: 71px 52px 69px 40px; }
.jl { display: flex; justify-content: space-between; width: 54px; }
.jl i { display: block; }
.two b { font: 700 14px/16px "Liberation Serif", "Noto Sans CJK SC", serif; }
.ok { color: #16801a; } .warn { color: #df8a10; } .err { color: #e8102a; } .ban { color: #a50f14; }
.vt { margin: 0 6px 0 7px; flex: 1; min-height: 0; overflow: hidden; }
.vr { display: grid; grid-template-columns: 371.500px 332.500px 334px 330px 241px 11px; }
.vr > div { padding-left: 1px; white-space: nowrap; }
.vh { height: 17px; border-top: 1px solid #a5b4cc; background: linear-gradient(#edf2fa, #dbe5f4); line-height: 16px; color: #5a5a5a; }
.vh > div { padding-left: 2px; }
.va { height: 21px; background: #5f8ecc; color: #eef5ff; line-height: 22px; border-bottom: 1px solid #dfe8f4; -webkit-text-stroke: .25px #eef5ff; }
.va > div { padding-left: 3px; }
.ve { height: 22px; border-bottom: 1px solid #ddd; }
.ve > div { border-right: 1px solid #ddd; }
.ve > div:last-child { border-right: 0; }
```
